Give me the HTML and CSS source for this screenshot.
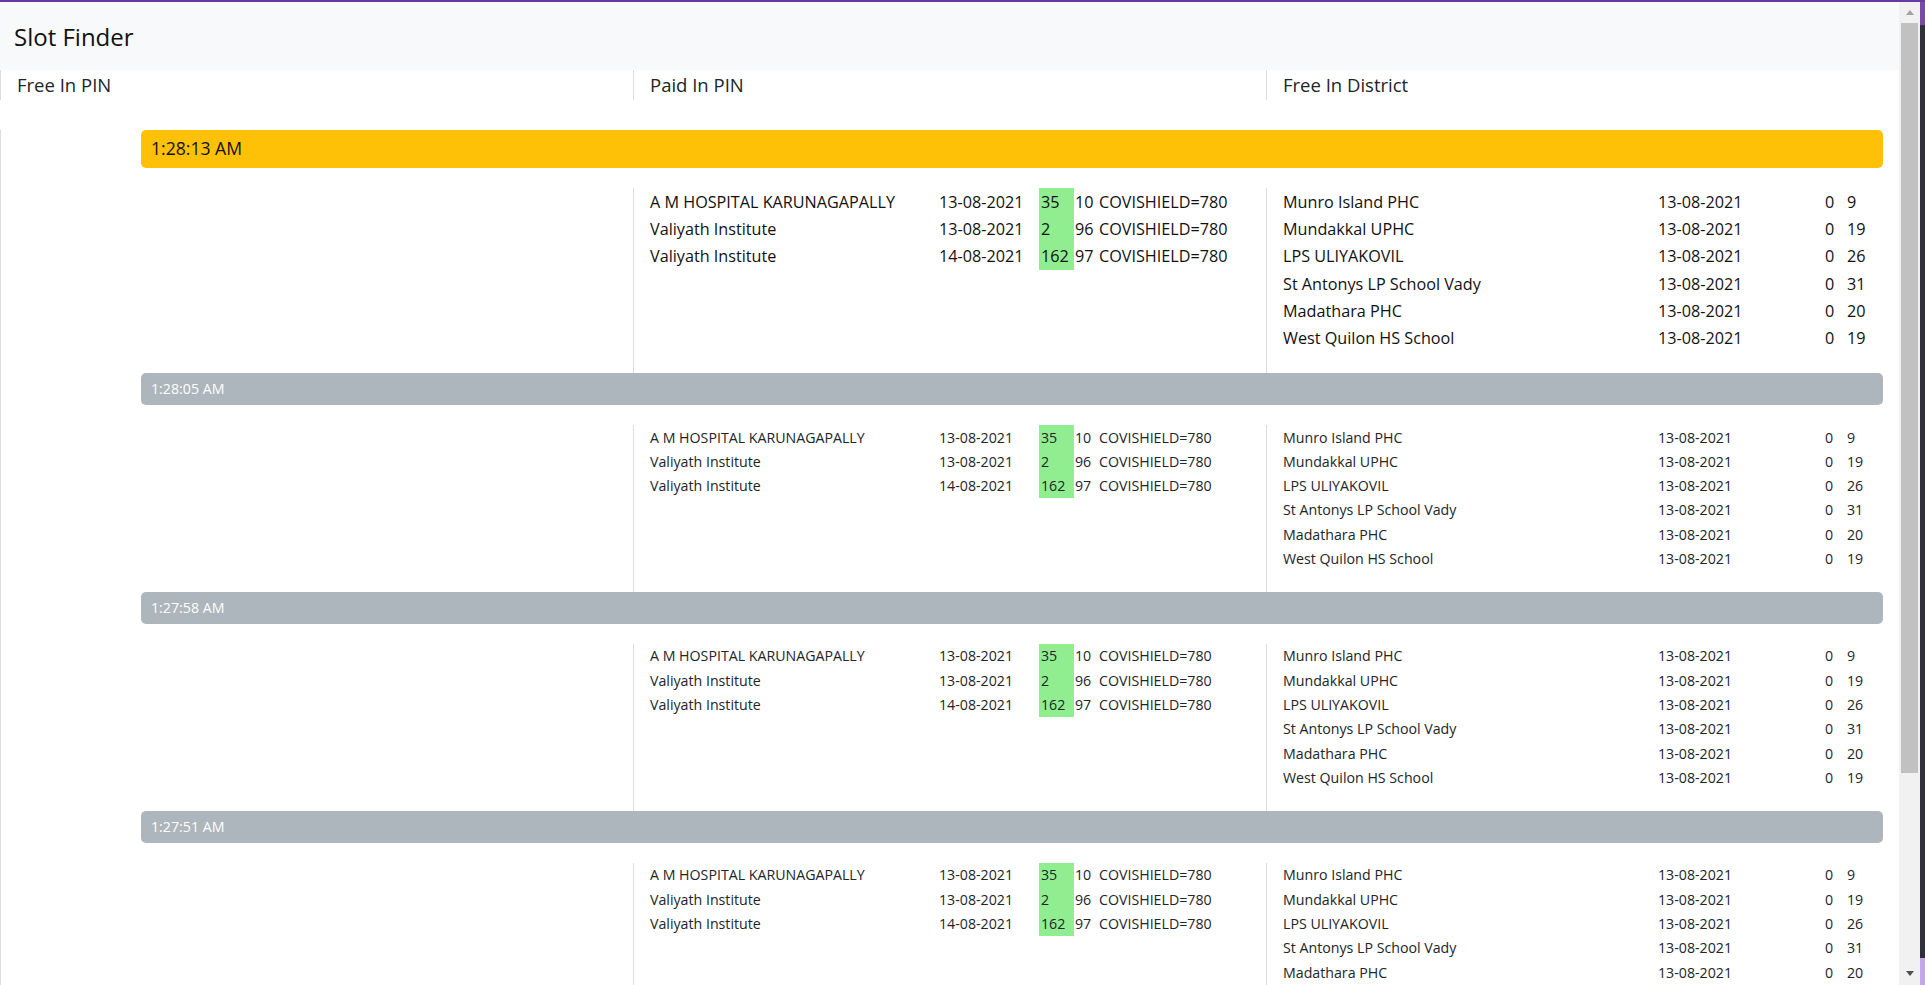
FILE: index.html
```html
<!DOCTYPE html>
<html lang="en">
<head>
<meta charset="utf-8">
<title>Slot Finder</title>
<link rel="stylesheet" href="styles.css">
</head>
<body>
<div class="window">
  <div class="page">
    <header class="navbar"><span class="brand">Slot Finder</span></header>
    <div class="col-heads">
      <div class="col-head">Free In PIN</div>
      <div class="col-head">Paid In PIN</div>
      <div class="col-head">Free In District</div>
    </div>
    <main class="feed">

      <section class="block block-current">
        <div class="stamp stamp-current">1:28:13 AM</div>
        <div class="block-body">
          <div class="col"></div>
          <div class="col sep">
            <div class="paid">
              <div>A M HOSPITAL KARUNAGAPALLY</div><div>13-08-2021</div><div class="avail">35</div><div class="num">10</div><div>COVISHIELD=780</div>
              <div>Valiyath Institute</div><div>13-08-2021</div><div class="avail">2</div><div class="num">96</div><div>COVISHIELD=780</div>
              <div>Valiyath Institute</div><div>14-08-2021</div><div class="avail">162</div><div class="num">97</div><div>COVISHIELD=780</div>
            </div>
          </div>
          <div class="col sep">
            <div class="district">
              <div>Munro Island PHC</div><div>13-08-2021</div><div>0</div><div>9</div>
              <div>Mundakkal UPHC</div><div>13-08-2021</div><div>0</div><div>19</div>
              <div>LPS ULIYAKOVIL</div><div>13-08-2021</div><div>0</div><div>26</div>
              <div>St Antonys LP School Vady</div><div>13-08-2021</div><div>0</div><div>31</div>
              <div>Madathara PHC</div><div>13-08-2021</div><div>0</div><div>20</div>
              <div>West Quilon HS School</div><div>13-08-2021</div><div>0</div><div>19</div>
            </div>
          </div>
        </div>
      </section>

      <section class="block">
        <div class="stamp stamp-old">1:28:05 AM</div>
        <div class="block-body">
          <div class="col"></div>
          <div class="col sep">
            <div class="paid">
              <div>A M HOSPITAL KARUNAGAPALLY</div><div>13-08-2021</div><div class="avail">35</div><div class="num">10</div><div>COVISHIELD=780</div>
              <div>Valiyath Institute</div><div>13-08-2021</div><div class="avail">2</div><div class="num">96</div><div>COVISHIELD=780</div>
              <div>Valiyath Institute</div><div>14-08-2021</div><div class="avail">162</div><div class="num">97</div><div>COVISHIELD=780</div>
            </div>
          </div>
          <div class="col sep">
            <div class="district">
              <div>Munro Island PHC</div><div>13-08-2021</div><div>0</div><div>9</div>
              <div>Mundakkal UPHC</div><div>13-08-2021</div><div>0</div><div>19</div>
              <div>LPS ULIYAKOVIL</div><div>13-08-2021</div><div>0</div><div>26</div>
              <div>St Antonys LP School Vady</div><div>13-08-2021</div><div>0</div><div>31</div>
              <div>Madathara PHC</div><div>13-08-2021</div><div>0</div><div>20</div>
              <div>West Quilon HS School</div><div>13-08-2021</div><div>0</div><div>19</div>
            </div>
          </div>
        </div>
      </section>

      <section class="block">
        <div class="stamp stamp-old">1:27:58 AM</div>
        <div class="block-body">
          <div class="col"></div>
          <div class="col sep">
            <div class="paid">
              <div>A M HOSPITAL KARUNAGAPALLY</div><div>13-08-2021</div><div class="avail">35</div><div class="num">10</div><div>COVISHIELD=780</div>
              <div>Valiyath Institute</div><div>13-08-2021</div><div class="avail">2</div><div class="num">96</div><div>COVISHIELD=780</div>
              <div>Valiyath Institute</div><div>14-08-2021</div><div class="avail">162</div><div class="num">97</div><div>COVISHIELD=780</div>
            </div>
          </div>
          <div class="col sep">
            <div class="district">
              <div>Munro Island PHC</div><div>13-08-2021</div><div>0</div><div>9</div>
              <div>Mundakkal UPHC</div><div>13-08-2021</div><div>0</div><div>19</div>
              <div>LPS ULIYAKOVIL</div><div>13-08-2021</div><div>0</div><div>26</div>
              <div>St Antonys LP School Vady</div><div>13-08-2021</div><div>0</div><div>31</div>
              <div>Madathara PHC</div><div>13-08-2021</div><div>0</div><div>20</div>
              <div>West Quilon HS School</div><div>13-08-2021</div><div>0</div><div>19</div>
            </div>
          </div>
        </div>
      </section>

      <section class="block">
        <div class="stamp stamp-old">1:27:51 AM</div>
        <div class="block-body">
          <div class="col"></div>
          <div class="col sep">
            <div class="paid">
              <div>A M HOSPITAL KARUNAGAPALLY</div><div>13-08-2021</div><div class="avail">35</div><div class="num">10</div><div>COVISHIELD=780</div>
              <div>Valiyath Institute</div><div>13-08-2021</div><div class="avail">2</div><div class="num">96</div><div>COVISHIELD=780</div>
              <div>Valiyath Institute</div><div>14-08-2021</div><div class="avail">162</div><div class="num">97</div><div>COVISHIELD=780</div>
            </div>
          </div>
          <div class="col sep">
            <div class="district">
              <div>Munro Island PHC</div><div>13-08-2021</div><div>0</div><div>9</div>
              <div>Mundakkal UPHC</div><div>13-08-2021</div><div>0</div><div>19</div>
              <div>LPS ULIYAKOVIL</div><div>13-08-2021</div><div>0</div><div>26</div>
              <div>St Antonys LP School Vady</div><div>13-08-2021</div><div>0</div><div>31</div>
              <div>Madathara PHC</div><div>13-08-2021</div><div>0</div><div>20</div>
              <div>West Quilon HS School</div><div>13-08-2021</div><div>0</div><div>19</div>
            </div>
          </div>
        </div>
      </section>

    </main>
  </div>
  <div class="scrollbar">
    <div class="sb-btn"><span class="tri-up"></span></div>
    <div class="sb-thumb"></div>
    <div class="sb-rest"></div>
    <div class="sb-btn sb-btn-down"><span class="tri-down"></span></div>
  </div>
  <div class="edge">
    <div class="edge-top"></div>
    <div class="edge-mid"></div>
    <div class="edge-bot"></div>
  </div>
</div>
</body>
</html>
```

FILE: styles.css
```css
html, body {
  margin: 0;
  padding: 0;
  width: 1925px;
  height: 985px;
  overflow: hidden;
  background: #fff;
}

body {
  font-family: "Open Sans", "Noto Sans", sans-serif;
  color: #212529;
  border-top: 2px solid #643b9f;
  box-sizing: border-box;
}

.window {
  display: flex;
  height: 983px;
}

.page {
  width: 1899px;
  flex: none;
  overflow: hidden;
}

.navbar {
  height: 68px;
  background: #f8f9fa;
  display: flex;
  align-items: center;
  padding-left: 14px;
}

.brand {
  font-size: 24px;
  line-height: 32px;
  font-weight: 500;
  color: #111;
  margin-top: 2px;
}

.col-heads {
  display: grid;
  grid-template-columns: 633px 633px 633px;
}

.col-head {
  border-left: 1px solid #dcdcdc;
  height: 30px;
  line-height: 30px;
  font-size: 18.5px;
  padding-left: 16px;
}

.feed {
  margin-top: 30px;
  border-left: 1px solid #dcdcdc;
}

.stamp {
  margin-left: 140px;
  margin-right: 16px;
  border-radius: 5px;
  padding-left: 10px;
}

.stamp-current {
  background: #ffc107;
  color: #111;
  font-size: 17.6px;
  height: 38px;
  line-height: 36px;
}

.stamp-old {
  background: #adb5bd;
  color: #fff;
  font-size: 14.2px;
  height: 32px;
  line-height: 31px;
}

.block-body {
  display: grid;
  grid-template-columns: 632px 633px 633px;
  margin-top: 20px;
}

.col {
  padding-bottom: 21px;
}

.col.sep {
  border-left: 1px solid #dcdcdc;
  padding-left: 16px;
}

.paid {
  display: grid;
  grid-template-columns: 289px 100px 35px 25px auto;
}

.district {
  display: grid;
  grid-template-columns: 375px 167px 22px auto;
}

.paid > div,
.district > div {
  font-size: 14.2px;
  line-height: 21px;
  padding: 1.67px 0;
  white-space: nowrap;
}

.block-current .paid > div,
.block-current .district > div {
  font-size: 16.2px;
  line-height: 24px;
  color: #111;
}

.paid > .avail {
  background: #90ee90;
  padding-left: 2px;
}

.paid > .num {
  padding-left: 1px;
}

/* fake window scrollbar */
.scrollbar {
  width: 21px;
  flex: none;
  background: #f1f1f1;
  display: flex;
  flex-direction: column;
}

.sb-btn {
  height: 21px;
  display: flex;
  align-items: center;
  justify-content: center;
}

.sb-btn-down {
  height: 17px;
  align-items: flex-start;
}

.tri-up {
  width: 0;
  height: 0;
  border-left: 4.5px solid transparent;
  border-right: 4.5px solid transparent;
  border-bottom: 5px solid #a3a3a3;
}

.tri-down {
  width: 0;
  height: 0;
  margin-top: 3px;
  border-left: 4.5px solid transparent;
  border-right: 4.5px solid transparent;
  border-top: 5px solid #505050;
}

.sb-thumb {
  height: 750px;
  margin: 0 2px;
  background: #c1c1c1;
}

.sb-rest {
  flex: 1;
}

.edge {
  width: 5px;
  flex: none;
  display: flex;
  flex-direction: column;
  margin-top: -2px;
}

.edge-top {
  height: 25px;
  background: #7a4aa6;
}

.edge-mid {
  flex: 1;
  background: #2f303c;
}

.edge-bot {
  height: 27px;
  background: #c3a6ee;
}
```
